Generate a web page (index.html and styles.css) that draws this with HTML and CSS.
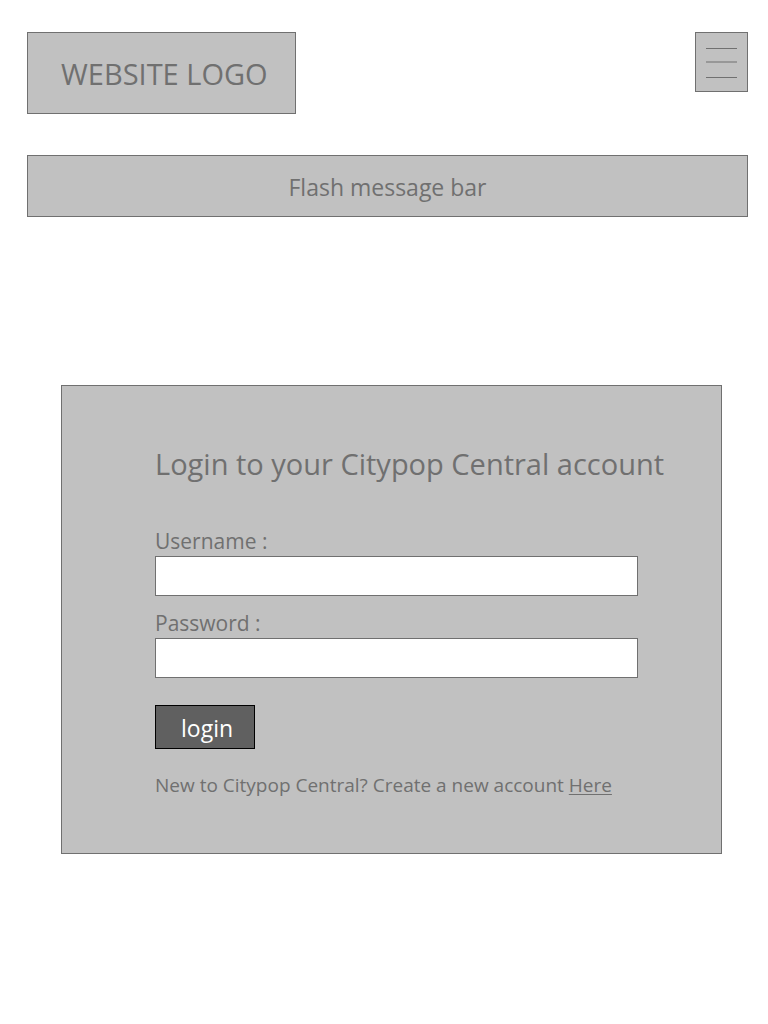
FILE: index.html
```html
<!DOCTYPE html>
<html lang="en">
<head>
<meta charset="utf-8">
<meta name="viewport" content="width=device-width, initial-scale=1">
<title>Login - Citypop Central</title>
<link rel="stylesheet" href="styles.css">
</head>
<body>
<header class="site-header">
  <a class="logo" href="#">WEBSITE LOGO</a>
  <button class="menu-button" type="button" aria-label="Menu">
    <svg class="menu-icon" width="31" height="30" viewBox="0 0 31 30" aria-hidden="true">
      <rect class="menu-line" width="31" height="1"/>
      <rect class="menu-line-soft" y="13" width="31" height="2"/>
      <rect class="menu-line" y="29" width="31" height="1"/>
    </svg>
  </button>
</header>
<div class="flash" role="status">Flash message bar</div>
<main class="login-card">
  <h1 class="title">Login to your Citypop Central account</h1>
  <form class="login-form">
    <label class="label" for="username">Username :</label>
    <input class="field" id="username" name="username" type="text">
    <label class="label" for="password">Password :</label>
    <input class="field" id="password" name="password" type="password">
    <button class="submit" type="submit">login</button>
  </form>
  <p class="signup">New to Citypop Central? Create a new account <a class="signup-link" href="#">Here</a></p>
</main>
</body>
</html>
```
FILE: styles.css
```css
* {
  box-sizing: border-box;
}

body {
  margin: 0;
  padding: 32px 20px 32px 27px;
  background: #fff;
  color: #707070;
  font-family: "Segoe UI", "Open Sans", "Noto Sans", sans-serif;
}

.site-header {
  display: flex;
  justify-content: space-between;
  align-items: flex-start;
}

.logo {
  padding: 21px 27px 19px 33px;
  border: 1px solid #707070;
  background: #c1c1c1;
  color: inherit;
  font-size: 29px;
  line-height: 40px;
  text-decoration: none;
}

.menu-button {
  padding: 15px 10px 13px;
  border: 1px solid #707070;
  background: #c1c1c1;
  line-height: 0;
}

.menu-icon {
  display: block;
}

.menu-line {
  fill: #707070;
}

.menu-line-soft {
  fill: #989898;
}

.flash {
  margin-top: 41px;
  padding: 16px 15px 14px;
  border: 1px solid #707070;
  background: #c1c1c1;
  font-size: 23px;
  line-height: 30px;
  text-align: center;
}

.login-card {
  margin: 168px 26px 0 34px;
  padding: 58px 48px 53px 93px;
  border: 1px solid #707070;
  background: #c1c1c1;
}

.title {
  margin: 0 0 42px;
  font-size: 29px;
  font-weight: 400;
  line-height: 40px;
}

.login-form {
  display: flex;
  flex-direction: column;
  max-width: 483px;
}

.label {
  font-size: 21px;
  line-height: 30px;
}

.field {
  width: 100%;
  height: 40px;
  margin: 0 0 12px;
  padding: 0 10px;
  border: 1px solid #707070;
  border-radius: 0;
  background: #fff;
  color: #707070;
  font: inherit;
  font-size: 21px;
}

.submit {
  align-self: flex-start;
  margin: 15px 0 0;
  padding: 7px 21px 5px 25px;
  border: 1px solid #000;
  background: #606060;
  color: #fff;
  font: inherit;
  font-size: 23px;
  line-height: 30px;
}

.signup {
  margin: 21px 0 0;
  font-size: 19px;
  line-height: 30px;
}

.signup-link {
  color: inherit;
  text-decoration-thickness: 1px;
  text-underline-offset: 2px;
}
```
